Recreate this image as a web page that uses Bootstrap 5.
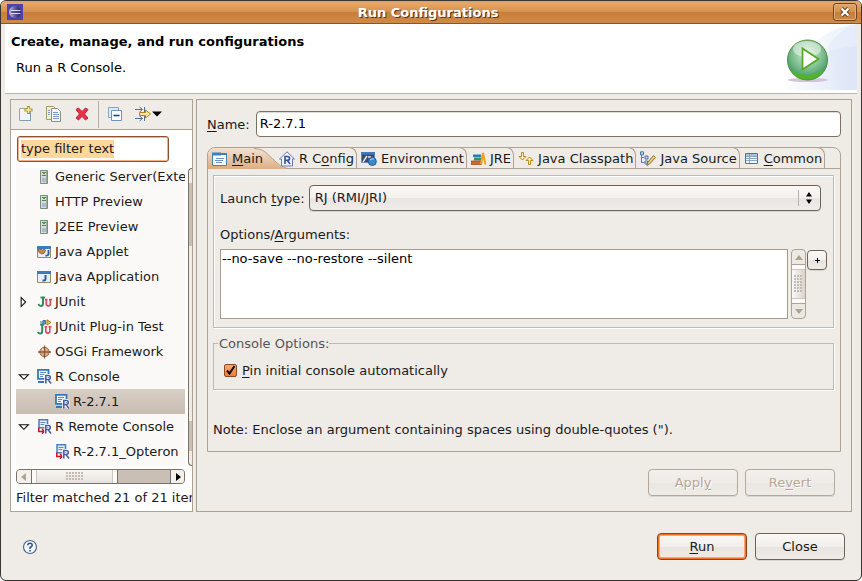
<!DOCTYPE html>
<html lang="en">
<head>
<meta charset="utf-8">
<meta name="viewport" content="width=device-width, initial-scale=1">
<title>Run Configurations</title>
<link href="https://cdn.jsdelivr.net/npm/bootstrap@5.3.0/dist/css/bootstrap.min.css" rel="stylesheet">
<style>
:root{--line:#b0a290;--face:#efebe7;--dark:#7c6f64}
body{font-family:"DejaVu Sans",sans-serif;font-size:13px;line-height:17px;color:#1a1a1a;background:#fff}
svg{display:block;flex:none}
u{text-underline-offset:2px}
button{color:inherit}
.dialog{background:var(--face);border:1px solid #3c3633;border-radius:6px;min-height:100vh;overflow:hidden}
.titlebar{height:23px;padding:0 4px 0 6px;color:#fff;font-weight:700;background:linear-gradient(#dca06c 0,#e6a868 10%,#d69150 48%,#c87f3a 52%,#d08a48 100%);border-bottom:1px solid #8a5526;text-shadow:1px 1px 0 #5a3410}
.close-x{width:24px;height:18px;border:1px solid #6f4420;border-radius:3px;box-shadow:inset 0 0 0 1px #e3ae7d;background:transparent}
.banner{margin:0 4px;padding:0 0 0 6px;height:70px;background:#fff;border-bottom:1px solid #b9b5b2;color:#000}
.banner h1{font-size:13px;font-weight:700;line-height:17px;margin:9px 0 9px}
.banner p{padding-left:5px}
.main-area{padding:5px 9px 0;gap:3px}
.side{width:183px;flex:none;border:1px solid var(--line);background:#fff;overflow:hidden}
.tools{height:30px;background:var(--face);border-bottom:1px solid var(--line);padding:0 0 1px 7px}
.tool{width:16px;height:16px}
.sep{width:1px;height:27px;background:#b7ada3}
.filter{margin:6px 0 6px 6px;width:152px;height:26px;padding:0 3px 2px;border:1px solid #91502a;border-radius:3px;box-shadow:inset 0 0 0 1px #f5b083;color:#1a1a1a;font-size:13px;outline:0;background:#fff linear-gradient(#ffd799,#ffd799) no-repeat 3px 3px/93px 18px}
.tree-wrap{margin-left:5px;gap:3px;height:298px}
.tree{width:169px;flex:none;background:#faf9f7;overflow:hidden;margin:0;padding:0 0 2px;display:flex;flex-direction:column;justify-content:flex-end}
.tree li{height:25px;flex:none;display:flex;align-items:center;padding-left:21px;white-space:nowrap}
.tree li.twig{padding-left:0}
.tree li.leaf{padding-left:39px}
.tree li.on{background:linear-gradient(#d8cfc5,#c9bdb1)}
.tree .arw{width:21px;padding-left:2px}
.tree .pic{width:15px;margin-right:3px}
.vbar{flex:1;display:flex;flex-direction:column;border:1px solid var(--dark);border-right:0;border-radius:5px 0 0 5px;overflow:hidden;background:var(--face)}
.vbar i{display:block}
.vbar .knob{flex:14}
.vbar .above{flex:63}
.vbar .thumb{flex:176}
.vbar .below{flex:30}
.trough{background:#c9bfb5}
.hbar{width:169px;height:15px;margin:3px 0 0 5px;border:1px solid var(--dark);border-radius:4px;overflow:hidden;background:#c9bfb5}
.hbar .end{width:14px;display:flex;align-items:center;justify-content:center;background:#f3f0ed}
.hthumb{width:87px;border-left:1px solid var(--dark);border-right:1px solid var(--dark);background:linear-gradient(#f8f6f4,#e7e2dd);display:flex;justify-content:center;align-items:center}
.hthumb .cap{width:5px;height:13px;background:#fcfbfa}
.hthumb .cap:first-child{border-right:1px solid #cdc6be}
.hthumb .cap:last-child{border-left:1px solid #cdc6be}
.dots{width:18px;height:9px;background:radial-gradient(circle at 1px 1px,#c4bcb4 0 1px,transparent 1px) 0 0/3px 3px}
.status{padding:5px 0 0 5px;white-space:nowrap}
.detail{border:1px solid #a9a294;padding:11px 10px 15px;min-width:0}
.field{height:26px;border:1px solid var(--dark);border-radius:4px;padding:0 3px 2px;margin-left:6px;background:#fff;color:#000;box-shadow:inset 0 1px 0 #dedad6}
.folder{margin-top:10px;border:1px solid var(--line);border-radius:8px 8px 0 0}
.strip{height:21px;border-bottom:1px solid var(--line);flex-wrap:nowrap}
.strip button{height:21px;margin-top:-1px;padding:1px 2px 0 4px;gap:4px;background:none;border:0 solid var(--line);border-top-width:1px;border-right-width:1px;border-top-right-radius:8px;display:flex;align-items:center;white-space:nowrap;position:relative}
.strip .sel{padding:1px 12px 0 4px;border-color:transparent;border-right:0}
.strip .sel>*{position:relative}
.strip .sel .shape{position:absolute;left:0;top:0;width:80px;height:21px}
.page{padding:6px 6px 12px 5px}
.group{border:1px solid #bdb9b6;box-shadow:1px 1px 0 #fff,inset 1px 1px 0 #fff;padding:9px 12px 8px 6px}
.group .caption{display:block;margin:15px 0 6px}
.argrow{margin-right:-6px}
.combo{height:26px;border:1px solid #6d6258;border-radius:4px;padding:0 30px 2px 5px;color:#1a1a1a;appearance:none;box-shadow:0 1px 0 #d9d4cf;background:url("data:image/svg+xml,%3Csvg xmlns='http://www.w3.org/2000/svg' width='22' height='16'%3E%3Cpath d='M.5 0v16' stroke='%23b9b1a8'/%3E%3Cpath d='M8 6.500L11 2l3 4.500zM8 9.500L11 14l3-4.500z'/%3E%3C/svg%3E") no-repeat right 0 center,linear-gradient(#faf8f7,#f3f0ed 50%,#e9e5e1 52%,#efecea)}
.args{height:70px;border:1px solid #a89c90;padding:0 1px;resize:none;background:#fff;color:#000;overflow:hidden;line-height:17px}
.abar{width:15px;border:1px solid var(--line);border-radius:4px;overflow:hidden;background:#ebe9e3;margin:0 1px 0 3px}
.abar .end{height:14px;display:flex;align-items:center;justify-content:center}
.abar .mid{border:solid var(--line);border-width:1px 0;background:linear-gradient(90deg,#faf9f8,#d9d3cc)}
.abar .cap{height:5px;background:#fbfafa;align-self:stretch}
.abar .cap:first-child{border-bottom:1px solid #cdc6be}
.abar .cap:last-child{border-top:1px solid #cdc6be}
.abar .vdots{width:9px;height:18px;background:radial-gradient(circle at 1px 1px,#c4bcb4 0 1px,transparent 1px) 0 0/3px 3px}
.push{height:27px;width:90px;padding:0;border:1px solid #6d6258;border-radius:4px;box-shadow:0 1px 0 #d9d4cf;background:linear-gradient(#faf9f7,#f1eeeb 50%,#e8e4e0 52%,#efebe8)}
.push:disabled{color:#b5a898;border-color:#b5a898;text-shadow:1px 1px 0 #fff;background:linear-gradient(#f3f0ed,#efebe7 50%,#eae6e1 52%,#efebe7)}
.push.prime{border-color:#91421a;box-shadow:inset 0 0 0 1px #f26f22,inset 0 0 0 2px #fba56c}
.push.plus{width:20px;height:20px;display:flex;align-items:center;justify-content:center;margin-top:1px}
.optset{border:1px solid #bdb9b6;box-shadow:1px 1px 0 #fff;margin-top:7px;height:55px;padding:0 10px}
.optset legend{float:none;width:auto;font-size:13px;line-height:17px;color:#555;background:var(--face);margin:0 0 10px -6px;padding:0 0 0 1px}
.note{padding-top:31px}
.tick{appearance:none;width:13px;height:13px;margin:0 5px 0 0;border:1px solid #8a4a22;border-radius:2px;background:url("data:image/svg+xml,%3Csvg xmlns='http://www.w3.org/2000/svg' viewBox='0 0 11 11'%3E%3Cpath d='M2 5.500l2.500 3L9.500 1' fill='none' stroke='%23111' stroke-width='2'/%3E%3C/svg%3E") center/11px,linear-gradient(#f9a873,#ee7d35)}
.apply-row{gap:7px;padding:17px 6px 0 0}
.foot{padding:21px 16px 20px 21px;gap:8px}
</style>
</head>
<body>
<svg width="0" height="0" class="position-absolute" aria-hidden="true">
<defs>
<radialGradient id="ball" cx=".5" cy=".35" r=".65"><stop offset="0" stop-color="#d5ebcf"/><stop offset=".5" stop-color="#8cc69a"/><stop offset=".85" stop-color="#4fa36d"/><stop offset="1" stop-color="#3fae2a"/></radialGradient>
<linearGradient id="orb"><stop offset="0" stop-color="#d9b6cf"/><stop offset=".45" stop-color="#6a62a8"/><stop offset="1" stop-color="#1f1b5a"/></linearGradient>
<linearGradient id="wave" x1="0" x2="1"><stop offset="0" stop-color="#fff"/><stop offset="1" stop-color="#dbe4f6"/></linearGradient>
<linearGradient id="tabfill" x1="0" y1="1" x2=".12" y2="0"><stop offset="0" stop-color="#dcaa7c"/><stop offset="1" stop-color="#f1e0d0"/></linearGradient>
<symbol id="server" viewBox="0 0 15 16"><path d="M3.500 1.500h7v13h-7z" fill="#d5dfd2" stroke="#7c8c7c"/><path d="M5 3.500h4M5 6.500h4" stroke="#5f7a66"/><path d="M6 3h2v2H6z" fill="#2faa3a"/><path d="M5 9h4v4H5z" fill="#a8b9dc"/><path d="M9.500 2v12" stroke="#a3af9c"/></symbol>
<symbol id="japp" viewBox="0 0 15 14"><path d="M.5 1.500h13v11H.5z" fill="#e6f0fc" stroke="#9a8a5e"/><path d="M0 1h14v3H0z" fill="#3b7cc0"/><path d="M8.500 5v4q0 1.800-3 1.500" fill="none" stroke="#2a5ca8" stroke-width="2"/></symbol>
<symbol id="applet" viewBox="0 0 15 14"><path d="M.5 1.500h13v11H.5z" fill="#e6f0fc" stroke="#9a8a5e"/><path d="M0 1h14v3H0z" fill="#3b7cc0"/><path d="M11.500 5v4q0 1.800-3 1.500" fill="none" stroke="#2a5ca8" stroke-width="1.800"/><path d="M1 4l2 1 1-1 1.500 1L7 4l1.500 1-1 3-2.500 1-3-1.500z" fill="#c48a48" stroke="#7c4d20" stroke-width=".7"/></symbol>
<symbol id="junit" viewBox="0 0 15 16"><path d="M3.500 3.500H8M6 3.500v6q0 2.500-2.200 2.500Q2 12 1.500 10" fill="none" stroke="#338a62" stroke-width="2"/><path d="M8 5.700h2.500M12 5.700h3M9.300 6v4.200q0 1.600 2 1.600t2-1.600V6" fill="none" stroke="#dd4a5e" stroke-width="1.700"/></symbol>
<symbol id="jplug" viewBox="0 0 15 16"><path d="M3 5.500h4M5.200 6v6q0 2.500-2 2.500-1.700 0-2.200-1.500" fill="none" stroke="#338a62" stroke-width="2"/><path d="M7.500 7.700H10M11.500 7.700h3M8.800 8v4.500q0 1.600 2 1.600t2-1.600V8" fill="none" stroke="#dd4a5e" stroke-width="1.600"/><path d="M3 3h3M6 1.500h2.500v3.500H6z" fill="#6e9bd6" stroke="#3d6cb0"/><path d="M10 .8L14 3.500 10 6z" fill="#f0c850" stroke="#a87818"/></symbol>
<symbol id="osgi" viewBox="0 0 15 16"><circle cx="7.500" cy="8" r="4.700" fill="#dda981" stroke="#96684a"/><path d="M7.500 1.500v13M1 8h13" stroke="#8a5a40" stroke-width="1.300"/><path d="M5 5.500h1.500" stroke="#fbe5d0" stroke-width="1.500"/></symbol>
<symbol id="rcon" viewBox="0 0 15 15"><path d="M1 .8h10.500v9H1z" fill="#f2f8ff" stroke="#3778b8" stroke-width="1.800"/><path d="M3 3.500h6M3 5.500h5M3 7.500h3" stroke="#6a83b8"/><path d="M1 13h6" stroke="#3778b8" stroke-width="2"/><path d="M8.800 14.500V6.500h2.500q2 0 2 2t-2 2H9M11 10.500l3 4" fill="none" stroke="#fff" stroke-width="3"/><path d="M8.800 14.500V6.500h2.500q2 0 2 2t-2 2H9M11 10.500l3 4" fill="none" stroke="#4a5fa0" stroke-width="1.600"/></symbol>
<symbol id="rrem" viewBox="0 0 15 15"><path d="M2 .8h8.500v8H2z" fill="#e6effa" stroke="#4a7ebc" stroke-width="1.500"/><path d="M3.500 3.500h5M3.500 5.500h5" stroke="#6a83b8"/><path d="M1.800 8.500v4H7M5 10l2.500 2.500L5 14.500" fill="none" stroke="#cc1634" stroke-width="1.600"/><path d="M8.800 14.500V6.500h2.500q2 0 2 2t-2 2H9M11 10.500l3 4" fill="none" stroke="#fff" stroke-width="3"/><path d="M8.800 14.500V6.500h2.500q2 0 2 2t-2 2H9M11 10.500l3 4" fill="none" stroke="#4a5fa0" stroke-width="1.600"/></symbol>
<symbol id="open" viewBox="0 0 14 12"><path d="M1.500 3.500h10L6.500 8.500z" fill="#fff" stroke="#111" stroke-width="1.200"/></symbol>
<symbol id="shut" viewBox="0 0 12 14"><path d="M3.500 2v10L8.500 7z" fill="#fff" stroke="#111" stroke-width="1.200"/></symbol>
</defs>
</svg>
<div class="dialog d-flex flex-column">
<header class="titlebar d-flex align-items-center">
<svg width="16" height="16" viewBox="0 0 16 16"><path d="M0 0h16v16H0z" fill="#4b43b0"/><circle cx="8" cy="8" r="6" fill="url(#orb)"/><path d="M4 6.500h9.500M3.500 9.500h10" stroke="#cfe0f2" stroke-width="1.200"/><path d="M4 8h10" stroke="#3a3486"/></svg>
<span class="flex-grow-1 text-center">Run Configurations</span>
<button type="button" class="close-x p-0 d-flex align-items-center justify-content-center" aria-label="Close window"><svg width="10" height="10" viewBox="0 0 10 10"><path d="M1.500 1.500l7 7m0-7l-7 7" stroke="#5c3414" stroke-width="4"/><path d="M1.500 1.500l7 7m0-7l-7 7" stroke="#fff" stroke-width="2.400"/></svg></button>
</header>
<section class="banner d-flex justify-content-between">
<div><h1>Create, manage, and run configurations</h1><p class="mb-0">Run a R Console.</p></div>
<svg width="75" height="66" viewBox="0 0 75 66"><path d="M0 66Q28 4 75 0v66z" fill="url(#wave)" opacity=".55"/><path d="M0 66q10-38 75-44v44z" fill="url(#wave)"/><path d="M46 22Q57 5 75 0v66H60z" fill="#dfe7f8" opacity=".5"/><ellipse cx="26" cy="56" rx="20" ry="2" fill="#cfc4da"/><circle cx="25.500" cy="36" r="20" fill="url(#ball)" stroke="#5c8a3c"/><path d="M9 46a19 19 0 0033 0q-16 10-33 0z" fill="#52b81c" opacity=".75"/><ellipse cx="25" cy="25" rx="14" ry="8" fill="#fff" opacity=".45"/><path d="M20.500 24.500v21l16-10.500z" fill="#fff" stroke="#55a828" stroke-width="1.800"/></svg>
</section>
<main class="main-area d-flex flex-grow-1">
<aside class="side d-flex flex-column">
<div class="tools d-flex align-items-center">
<button type="button" class="btn p-0 border-0" aria-label="New configuration"><svg class="tool" viewBox="0 0 16 16"><path d="M1.500 2.500h8l3 3v9h-11z" fill="#f2f6fb" stroke="#a4a48c"/><path d="M3 14.500h9.500V7" fill="none" stroke="#7d98c0"/><path d="M10.500 0v8M6.500 4h8" stroke="#b48a20" stroke-width="3"/><path d="M10.500 1v6M7.500 4h6" stroke="#fde89a" stroke-width="1.500"/></svg></button>
<button type="button" class="btn p-0 border-0 ms-2 ps-1" aria-label="Duplicate configuration"><svg class="tool" viewBox="0 0 16 16"><path d="M.5.500h7l2 2v11h-9z" fill="#f7efc8" stroke="#a59a68"/><path d="M5.500 2.500h6l3 3v10h-9z" fill="#f3f6fb" stroke="#8b8f86"/><path d="M7 6.500h5M7 8.500h6M7 10.500h6M7 12.500h6M2 4.500h2M2 6.500h2M2 8.500h2" stroke="#7d98c8"/></svg></button>
<button type="button" class="btn p-0 border-0 ms-2 ps-1" aria-label="Delete configuration"><svg class="tool" viewBox="0 0 16 16"><path d="M2 3.500L4.500 2 8 5.500 11.500 2 14 3.500 10.500 8l3.500 4-2.500 2L8 10.500 4.500 14 2 12l3.500-4z" fill="#e8304a" stroke="#c02438"/></svg></button>
<div class="sep ms-2 me-2"></div>
<button type="button" class="btn p-0 border-0" aria-label="Collapse all"><svg class="tool" viewBox="0 0 16 16"><path d="M1.500 1.500h10v10h-10z" fill="#dbe8f6" stroke="#8aa4c4"/><path d="M4.500 4.500h10v10h-10z" fill="#fafdff" stroke="#6e93bd"/><path d="M6.500 9.500h6" stroke="#153e78" stroke-width="1.500"/></svg></button>
<button type="button" class="btn p-0 border-0 ms-2 ps-1" aria-label="Filter configurations"><svg width="28" height="16" viewBox="0 0 28 16"><path d="M0 3.500h7M0 12.500h7M9.500 1v5M9.500 10v5" stroke="#54708c"/><path d="M4.500 1l3 2.500-3 2.500M4.500 10l3 2.500-3 2.500" fill="none" stroke="#54708c"/><path d="M4.500 6.500h6V4l5 4-5 4V9.500h-6z" fill="#fbe79a" stroke="#b58218"/><path d="M17 5.500h10l-5 5z" fill="#000"/></svg></button>
</div>
<input type="text" class="filter flex-shrink-0" value="type filter text" aria-label="Filter text">
<div class="tree-wrap d-flex">
<ul class="tree list-unstyled">
<li><svg class="pic" height="16"><use href="#server"/></svg><span>Generic Server(Exte</span></li>
<li><svg class="pic" height="16"><use href="#server"/></svg><span>HTTP Preview</span></li>
<li><svg class="pic" height="16"><use href="#server"/></svg><span>J2EE Preview</span></li>
<li><svg class="pic" height="14"><use href="#applet"/></svg><span>Java Applet</span></li>
<li><svg class="pic" height="14"><use href="#japp"/></svg><span>Java Application</span></li>
<li class="twig"><svg class="arw" height="14" viewBox="0 0 21 14"><use href="#shut" width="12" height="14"/></svg><svg class="pic" height="16"><use href="#junit"/></svg><span>JUnit</span></li>
<li><svg class="pic" height="16"><use href="#jplug"/></svg><span>JUnit Plug-in Test</span></li>
<li><svg class="pic" height="16"><use href="#osgi"/></svg><span>OSGi Framework</span></li>
<li class="twig"><svg class="arw" height="12" viewBox="0 0 21 12"><use href="#open" width="14" height="12"/></svg><svg class="pic" height="15"><use href="#rcon"/></svg><span>R Console</span></li>
<li class="leaf on"><svg class="pic" height="15"><use href="#rcon"/></svg><span>R-2.7.1</span></li>
<li class="twig"><svg class="arw" height="12" viewBox="0 0 21 12"><use href="#open" width="14" height="12"/></svg><svg class="pic" height="15"><use href="#rrem"/></svg><span>R Remote Console</span></li>
<li class="leaf"><svg class="pic" height="15"><use href="#rrem"/></svg><span>R-2.7.1_Opteron</span></li>
</ul>
<div class="vbar"><i class="knob"></i><i class="trough above"></i><i class="thumb"></i><i class="trough below"></i><i class="knob"></i></div>
</div>
<div class="hbar d-flex flex-shrink-0"><div class="end"><svg width="6" height="8"><path d="M5 0v8L0 4z" fill="#b0a290"/></svg></div><div class="hthumb"><span class="cap"></span><span class="mx-auto dots"></span><span class="cap"></span></div><div class="flex-grow-1"></div><div class="end border-start border-secondary"><svg width="6" height="8"><path d="M1 0v8l5-4z"/></svg></div></div>
<div class="status">Filter matched 21 of 21 items</div>
</aside>
<section class="detail flex-grow-1 d-flex flex-column">
<div class="d-flex align-items-center"><label for="cfg"><u>N</u>ame:</label><input id="cfg" type="text" class="field flex-grow-1" value="R-2.7.1"></div>
<div class="folder flex-grow-1 d-flex flex-column">
<div class="strip nav" role="tablist">
<button type="button" role="tab" aria-selected="true" class="sel"><svg class="shape" viewBox="0 0 80 21"><path d="M0 21V8Q0 0 8 0h38q9 0 15 7l7 7q5 6 12 7z" fill="url(#tabfill)"/><path d="M46 .5q9 0 15 7l7 6.500q5 6 12 6.500" fill="none" stroke="#b0a290"/></svg><svg width="16" height="16" viewBox="0 0 16 16"><path d="M.5 2.500h14v12H.5z" fill="#f2faff" stroke="#4a80a8"/><path d="M0 1.500h9v3H0z" fill="#3d82c0"/><path d="M9 3h6" stroke="#3d82c0" stroke-width="2"/><path d="M4 7.500h8M3 9.500h8M4 11.500h6" stroke="#6d92bc"/></svg><span><u>M</u>ain</span></button>
<button type="button" role="tab"><svg width="16" height="16" viewBox="0 0 16 16"><path d="M.5 8L8 .8 15.500 8h-2v7h-11V8z" fill="#eef2fc" stroke="#6a7ab4"/><path d="M6 13V5.500h2.500q2 0 2 1.900t-2 1.900H6M8.500 9.500l2.500 3.500" fill="none" stroke="#3c4f9c" stroke-width="1.600"/></svg><span>R C<u>o</u>nfig</span></button>
<button type="button" role="tab"><svg width="16" height="16" viewBox="0 0 16 16"><path d="M.5 1.500h13v10H.5z" fill="#3c4c68" stroke="#6b87b5"/><path d="M0 1h14v2.500H0z" fill="#3f7cc2"/><path d="M2 11l4-6M7 6h3" stroke="#e6ebf4" stroke-width="1.400"/><circle cx="11.300" cy="10.500" r="4" fill="#3f86c6" stroke="#245c9c"/><path d="M9 9q2-2 4-1" fill="none" stroke="#b5dcf4"/></svg><span>Environment</span></button>
<button type="button" role="tab"><svg width="15" height="16" viewBox="0 0 15 16"><path d="M2 3.500h8v2.500H2z" fill="#2b7cb4"/><path d="M3 6.500h7.500v3H3z" fill="#2f9858"/><path d="M0 10h10.500v3.500H0z" fill="#d8632c" stroke="#a84014" stroke-width=".7"/><path d="M10 13.500L12 2l2.500 11.500" fill="none" stroke="#f0a018" stroke-width="2"/></svg><span>JRE</span></button>
<button type="button" role="tab"><svg width="16" height="16" viewBox="0 0 16 16"><path d="M3.500 1.500h2v4h2.500L4.500 9 1 5.500h2.500z" fill="#fdeeb0" stroke="#b88c20"/><path d="M10.500 13.500h2v-4H15L11.500 6 8 9.500h2.500z" fill="#fdeeb0" stroke="#b88c20"/></svg><span>Java Classpath</span></button>
<button type="button" role="tab"><svg width="16" height="16" viewBox="0 0 16 16"><path d="M1.500 2v10M2 6.500h2M2 11.500h2" stroke="#5b7bb0"/><path d="M.5.800h3v3h-3zM5 5h3v3H5zM5 10h2.500v3H5z" fill="#c2d6f0" stroke="#4d72b0"/><path d="M7 14.500l1-3.500 5.500-6.500 2 2-6 6.500z" fill="#f0cb74" stroke="#8a6c48"/></svg><span>Java Source</span></button>
<button type="button" role="tab"><svg width="16" height="16" viewBox="0 0 16 16"><path d="M1.500 2.500h12v10h-12z" fill="#f4f8fd" stroke="#56719b"/><path d="M2 3h11v2H2z" fill="#a9c0e0"/><path d="M2 5.500h11M2 7.500h11M2 9.500h11M5.500 3v9" stroke="#8ba5ca"/></svg><span><u>C</u>ommon</span></button>
</div>
<div class="page flex-grow-1">
<div class="group">
<div class="d-flex align-items-center"><label for="launch">Launch <u>t</u>ype:</label><select id="launch" class="combo flex-grow-1 ms-1"><option>RJ (RMI/JRI)</option></select></div>
<label for="args" class="caption">Options/<u>A</u>rguments:</label>
<div class="d-flex argrow"><textarea id="args" class="args flex-grow-1" spellcheck="false">--no-save --no-restore --silent</textarea>
<div class="abar d-flex flex-column"><div class="end"><svg width="8" height="5"><path d="M4 0l4 5H0z" fill="#b0a290"/></svg></div><div class="mid flex-grow-1 d-flex flex-column align-items-center"><span class="cap"></span><span class="vdots my-auto"></span><span class="cap"></span></div><div class="end"><svg width="8" height="5"><path d="M0 0h8L4 5z" fill="#b0a290"/></svg></div></div>
<button type="button" class="push plus" aria-label="Insert variable"><svg width="5" height="5"><path d="M2.500 0v5M0 2.500h5" stroke="#000"/></svg></button></div>
</div>
<fieldset class="optset"><legend>Console Options:</legend>
<div class="d-flex align-items-center"><input id="pin" type="checkbox" class="tick" checked><label for="pin"><u>P</u>in initial console automatically</label></div></fieldset>
<p class="mb-0 note">Note: Enclose an argument containing spaces using double-quotes (&quot;).</p>
</div>
</div>
<div class="d-flex justify-content-end apply-row"><button type="button" class="push" disabled>Appl<u>y</u></button><button type="button" class="push" disabled>Re<u>v</u>ert</button></div>
</section>
</main>
<footer class="foot d-flex align-items-center">
<button type="button" class="btn p-0 border-0 me-auto" aria-label="Help"><svg width="16" height="16" viewBox="0 0 16 16"><circle cx="8" cy="8" r="6.500" fill="#f4f7fc" stroke="#4d668e" stroke-width="1.200"/><path d="M5.800 6.300Q5.800 4.300 8 4.300t2.200 1.900Q10.200 7.500 8 8.500V10M8 11v1.500" fill="none" stroke="#2e4f8a" stroke-width="1.500"/></svg></button>
<button type="button" class="push prime"><u>R</u>un</button><button type="button" class="push">Close</button>
</footer>
</div>
<script src="https://cdn.jsdelivr.net/npm/bootstrap@5.3.0/dist/js/bootstrap.bundle.min.js"></script>
</body>
</html>
